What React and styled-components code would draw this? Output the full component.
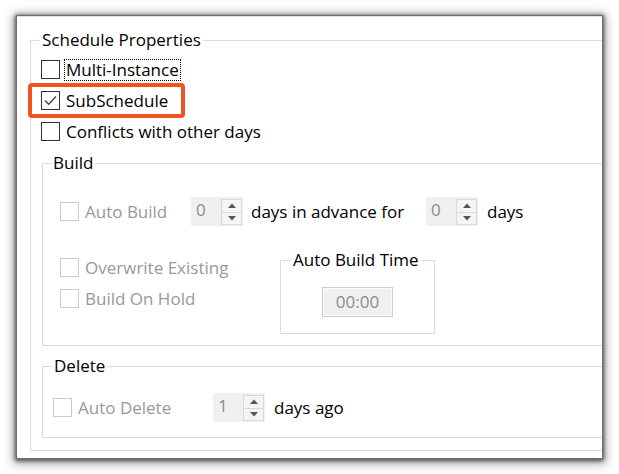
import React from 'react';
import styled, { createGlobalStyle } from 'styled-components';

const GlobalStyle = createGlobalStyle`
  html, body {
    margin: 0;
    padding: 0;
    background: #fff;
  }
  body {
    font-family: "Open Sans", "Noto Sans", sans-serif;
    font-size: 17px;
    color: #000;
  }
`;

const Page = styled.div`
  width: 619px;
  height: 474px;
  box-sizing: border-box;
  padding: 16px 0 0 17px;
  background: #fff;
`;

const Window = styled.div`
  width: 585px;
  height: 442px;
  box-sizing: border-box;
  padding: 23px 0 0 13px;
  background: #fff;
  border-top: 1px solid #e2e2e2;
  overflow: hidden;
  box-shadow: 0 0 0 1px #707070, 0 1px 4px 2px rgba(0, 0, 0, 0.6),
    0 2px 10px 4px rgba(0, 0, 0, 0.3);
`;

const GroupBox = styled.div`
  border: 1px solid #dcdcdc;
  width: ${({ $width }) => ($width ? `${$width}px` : 'auto')};
  margin: ${({ $mt = 0 }) => $mt}px 0 0 ${({ $ml = 0 }) => $ml}px;
  padding: 0 0 ${({ $pb = 0 }) => $pb}px ${({ $pl = 0 }) => $pl}px;
  box-sizing: border-box;
  flex-shrink: 0;
`;

const GroupTitle = styled.div`
  width: fit-content;
  height: 22px;
  line-height: 22px;
  margin: -12px 0 0 ${({ $ml = 0 }) => $ml}px;
  padding: 0 2px;
  background: #fff;
  color: #000;
  white-space: nowrap;
`;

const List = styled.div`
  display: flex;
  flex-direction: column;
  margin-top: ${({ $mt = 0 }) => $mt}px;
`;

const Row = styled.div`
  position: relative;
  display: flex;
  align-items: center;
  height: 31px;
  margin-top: ${({ $mt = 0 }) => $mt}px;
`;

const CheckItem = styled.label`
  display: flex;
  align-items: center;
  gap: 4px;
  width: ${({ $width }) => ($width ? `${$width}px` : 'auto')};
  flex-shrink: 0;
  color: ${({ $disabled }) => ($disabled ? '#999' : '#000')};
`;

const Box = styled.span`
  display: inline-flex;
  align-items: center;
  justify-content: center;
  width: 19px;
  height: 19px;
  box-sizing: border-box;
  border: 1px solid ${({ $disabled }) => ($disabled ? '#cccccc' : '#333')};
  background: #fff;
  flex-shrink: 0;
`;

const LabelText = styled.span`
  line-height: 20px;
  padding: 0 1px;
  border: 1px dotted ${({ $focused }) => ($focused ? '#000' : 'transparent')};
  white-space: nowrap;
`;

const Highlight = styled.div`
  position: absolute;
  left: -13px;
  top: -2px;
  width: 157px;
  height: 35px;
  box-sizing: border-box;
  border: 4px solid #f15323;
  border-radius: 4px;
  pointer-events: none;
`;

const Text = styled.span`
  white-space: nowrap;
  margin-left: ${({ $ml = 0 }) => $ml}px;
  width: ${({ $width }) => ($width ? `${$width}px` : 'auto')};
  flex-shrink: 0;
`;

const Spinner = styled.div`
  display: flex;
  width: 52px;
  height: 29px;
  background: #f0f0f0;
  flex-shrink: 0;
`;

const SpinValue = styled.div`
  flex: 1;
  padding: 0 0 0 5px;
  line-height: 26px;
  color: #8c8c8c;
`;

const SpinButtons = styled.div`
  display: flex;
  flex-direction: column;
  width: 22px;
  padding: 2px 1px 1px 0;
  box-sizing: border-box;
`;

const SpinButton = styled.div`
  flex: 1;
  display: flex;
  align-items: center;
  justify-content: center;
  border: 1px solid #d9d9d9;
  background: #f4f4f4;
  & + & {
    border-top: none;
  }
`;

const Lower = styled.div`
  display: flex;
  align-items: flex-start;
  margin-top: 25px;
`;

const LeftColumn = styled.div`
  display: flex;
  flex-direction: column;
  width: 220px;
`;

const TimeBox = styled.div`
  width: 71px;
  height: 30px;
  margin: 16px auto 0;
  box-sizing: border-box;
  border: 1px solid #cdcdcd;
  box-shadow: inset 0 0 0 1px #fafafa;
  background: #f0f0f0;
  color: #8c8c8c;
  text-align: center;
  line-height: 27px;
`;

const CheckMark = () => (
  <svg width="15" height="15" viewBox="0 0 15 15">
    <path d="M2 7.5 L5.6 11.2 L13 3.6" fill="none" stroke="#444" strokeWidth="1.4" />
  </svg>
);

const Arrow = ({ down }) => (
  <svg width="8" height="5" viewBox="0 0 8 5">
    <polygon points={down ? '0,0 8,0 4,4.5' : '0,5 8,5 4,0.5'} fill="#555" />
  </svg>
);

const Check = ({ label, checked, disabled, focused, width }) => (
  <CheckItem $disabled={disabled} $width={width}>
    <Box $disabled={disabled}>{checked && <CheckMark />}</Box>
    <LabelText $focused={focused}>{label}</LabelText>
  </CheckItem>
);

const NumberSpin = ({ value }) => (
  <Spinner>
    <SpinValue>{value}</SpinValue>
    <SpinButtons>
      <SpinButton>
        <Arrow />
      </SpinButton>
      <SpinButton>
        <Arrow down />
      </SpinButton>
    </SpinButtons>
  </Spinner>
);

export default function App() {
  return (
    <Page>
      <GlobalStyle />
      <Window>
        <GroupBox $width={640} $pl={10} $pb={12}>
          <GroupTitle $ml={-1}>Schedule Properties</GroupTitle>
          <List $mt={3}>
            <Row>
              <Check label="Multi-Instance" focused />
            </Row>
            <Row>
              <Check label="SubSchedule" checked />
              <Highlight />
            </Row>
            <Row>
              <Check label="Conflicts with other days" />
            </Row>
          </List>

          <GroupBox $mt={16} $ml={1} $pl={17} $pb={11}>
            <GroupTitle $ml={-9}>Build</GroupTitle>
            <Row $mt={22}>
              <Check label="Auto Build" disabled width={131} />
              <NumberSpin value="0" />
              <Text $ml={8} $width={175}>days in advance for</Text>
              <NumberSpin value="0" />
              <Text $ml={9}>days</Text>
            </Row>
            <Lower>
              <LeftColumn>
                <Row>
                  <Check label="Overwrite Existing" disabled />
                </Row>
                <Row>
                  <Check label="Build On Hold" disabled />
                </Row>
              </LeftColumn>
              <GroupBox $width={155} $mt={8} $pb={16}>
                <GroupTitle $ml={10}>Auto Build Time</GroupTitle>
                <TimeBox>00:00</TimeBox>
              </GroupBox>
            </Lower>
          </GroupBox>

          <GroupBox $mt={20} $ml={1} $pl={10} $pb={14}>
            <GroupTitle $ml={-1}>Delete</GroupTitle>
            <Row $mt={15}>
              <Check label="Auto Delete" disabled width={160} />
              <NumberSpin value="1" />
              <Text $ml={9}>days ago</Text>
            </Row>
          </GroupBox>
        </GroupBox>
      </Window>
    </Page>
  );
}
